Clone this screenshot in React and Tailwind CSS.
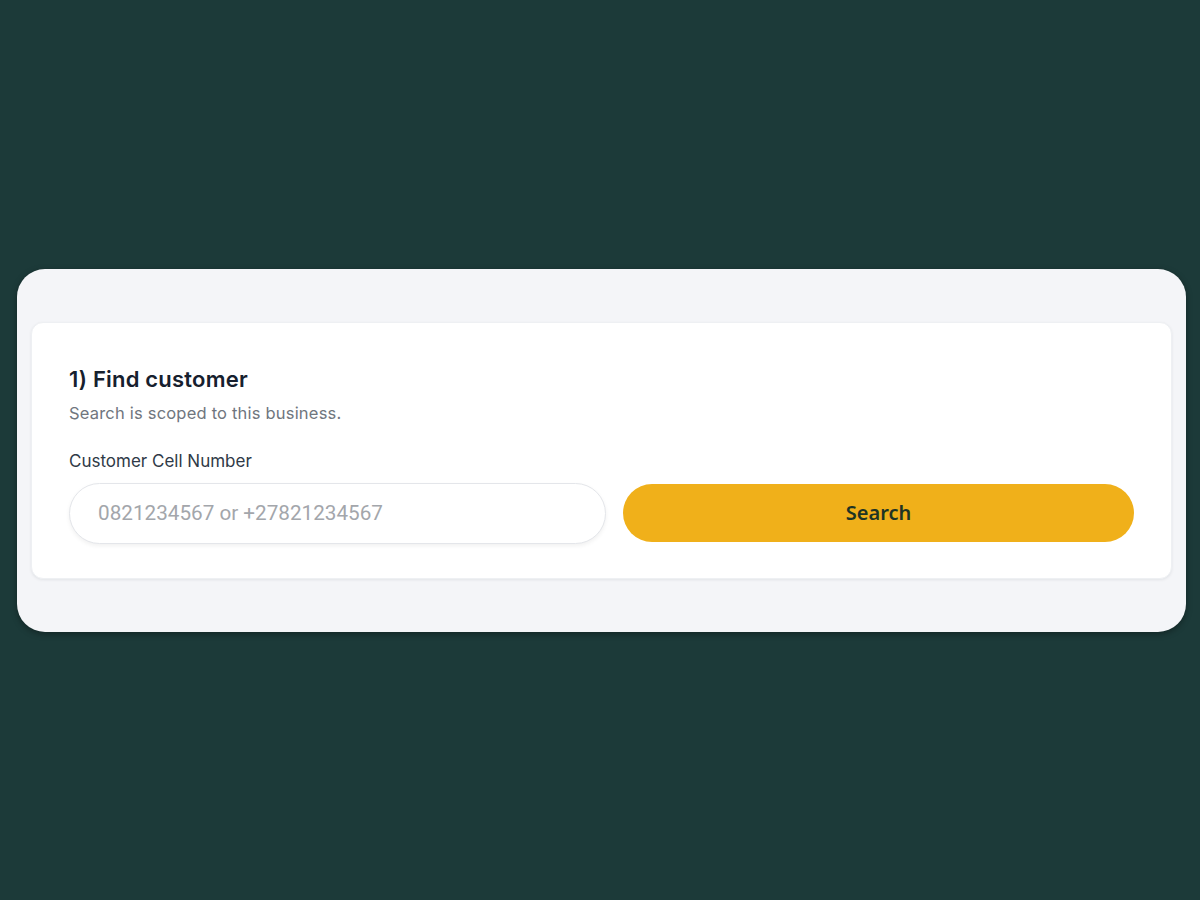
import { useState } from "react";

const App = () => {
  const [phone, setPhone] = useState("");

  return (
    <div className="min-h-[900px] w-full bg-[#1c3a39] flex items-center pl-[17px] pr-[14px] font-['Inter',sans-serif]">
      <div className="w-full rounded-[28px] bg-[#f4f5f8] px-[14px] py-[53px] shadow-[0_2px_6px_rgba(0,0,0,0.35)]">
        <div className="rounded-[12px] bg-white px-[37px] pt-[42px] pb-[34px] shadow-[0_1px_3px_rgba(15,23,42,0.08)] border border-[#eef0f3]">
          <h2 className="text-[22px] leading-[28px] font-semibold tracking-[0.2px] text-[#16202e]">1) Find customer</h2>
          <p className="mt-2 text-[16.5px] leading-6 tracking-[0.2px] text-[#70767e]">Search is scoped to this business.</p>
          <label className="mt-6 block text-[17px] leading-6 text-[#2f3a47]">Customer Cell Number</label>
          <div className="mt-[10px] flex items-center gap-[17px]">
            <input
              value={phone}
              onChange={(e) => setPhone(e.target.value)}
              placeholder="0821234567 or +27821234567"
              className="w-[537px] h-[61px] rounded-full border border-[#e4e6ea] bg-white pl-[28px] pr-4 text-[20.7px] font-['Roboto',sans-serif] text-[#1f2937] placeholder:text-[#a3a6ab] shadow-[0_2px_4px_rgba(0,0,0,0.06)] outline-none"
            />
            <button className="flex-1 h-[58px] rounded-full bg-[#f0b01a] text-[20px] font-semibold text-[#1e3424] font-['Noto_Sans',sans-serif]">
              Search
            </button>
          </div>
        </div>
      </div>
    </div>
  );
};

export default App;
